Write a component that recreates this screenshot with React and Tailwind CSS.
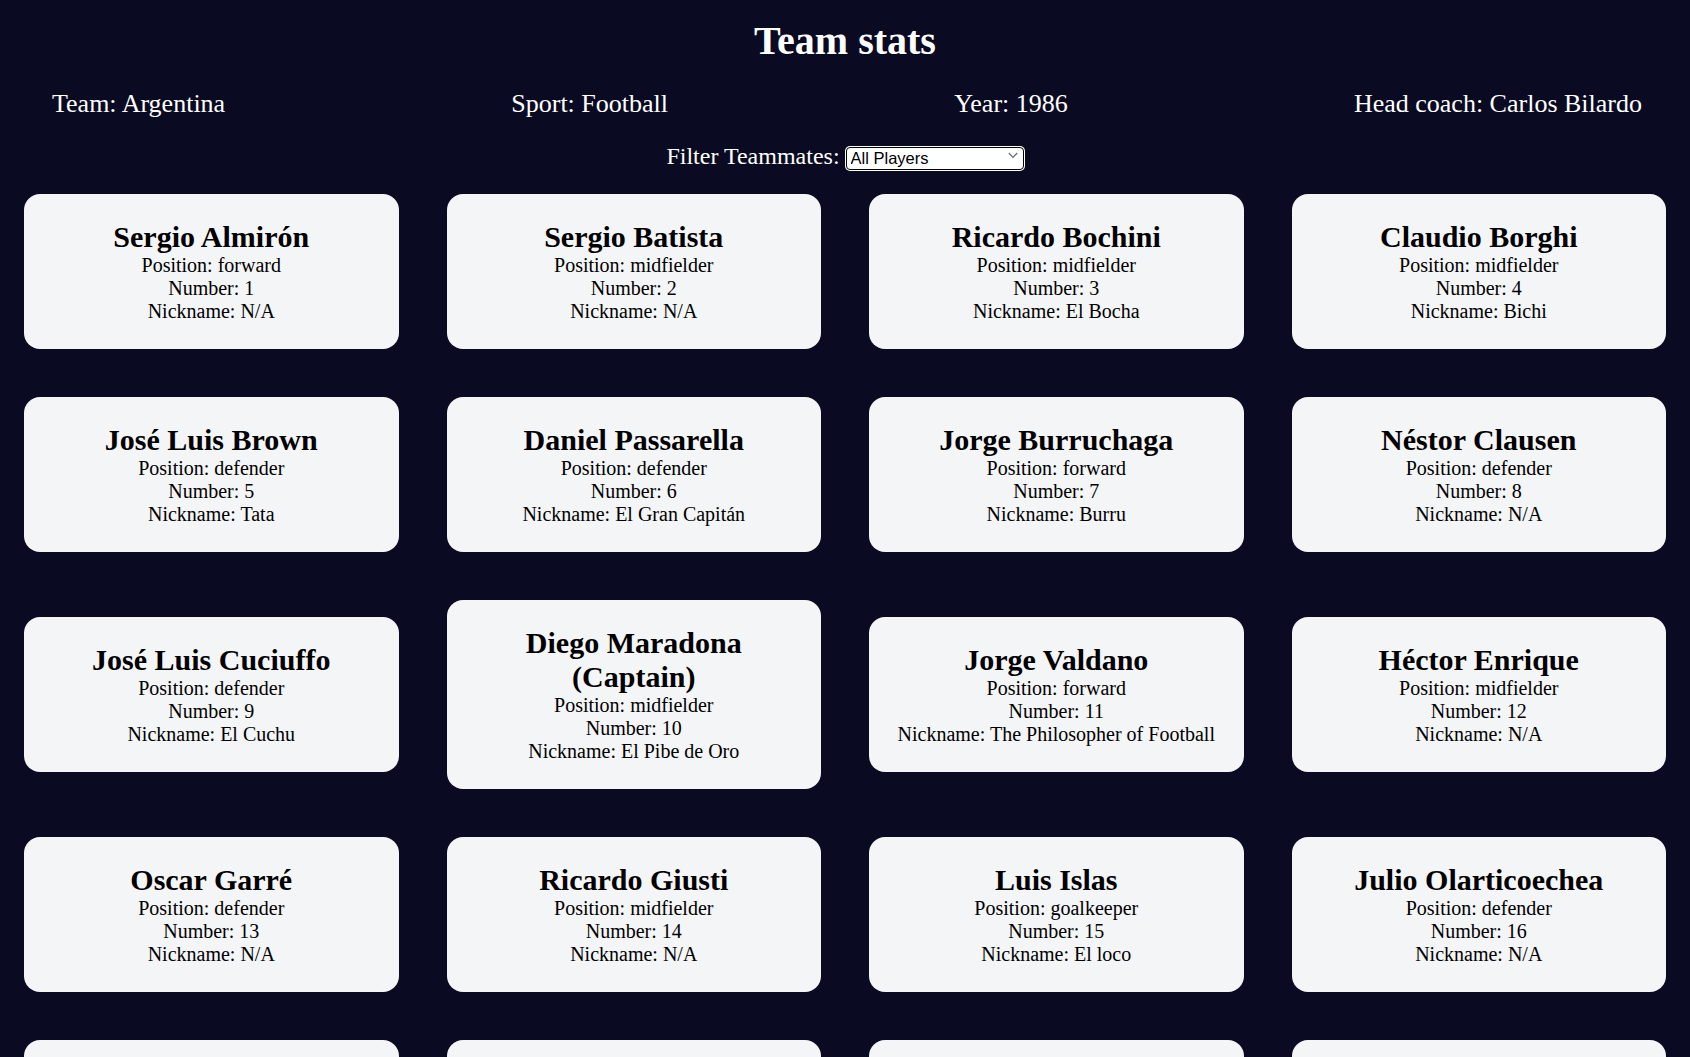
import React, { useState } from 'react';

const players = [
  { name: 'Sergio Almirón', position: 'forward', number: 1, nickname: 'N/A' },
  { name: 'Sergio Batista', position: 'midfielder', number: 2, nickname: 'N/A' },
  { name: 'Ricardo Bochini', position: 'midfielder', number: 3, nickname: 'El Bocha' },
  { name: 'Claudio Borghi', position: 'midfielder', number: 4, nickname: 'Bichi' },
  { name: 'José Luis Brown', position: 'defender', number: 5, nickname: 'Tata' },
  { name: 'Daniel Passarella', position: 'defender', number: 6, nickname: 'El Gran Capitán' },
  { name: 'Jorge Burruchaga', position: 'forward', number: 7, nickname: 'Burru' },
  { name: 'Néstor Clausen', position: 'defender', number: 8, nickname: 'N/A' },
  { name: 'José Luis Cuciuffo', position: 'defender', number: 9, nickname: 'El Cuchu' },
  { name: 'Diego Maradona', position: 'midfielder', number: 10, nickname: 'El Pibe de Oro', captain: true },
  { name: 'Jorge Valdano', position: 'forward', number: 11, nickname: 'The Philosopher of Football' },
  { name: 'Héctor Enrique', position: 'midfielder', number: 12, nickname: 'N/A' },
  { name: 'Oscar Garré', position: 'defender', number: 13, nickname: 'N/A' },
  { name: 'Ricardo Giusti', position: 'midfielder', number: 14, nickname: 'N/A' },
  { name: 'Luis Islas', position: 'goalkeeper', number: 15, nickname: 'El loco' },
  { name: 'Julio Olarticoechea', position: 'defender', number: 16, nickname: 'N/A' },
  { name: 'Pedro Pasculli', position: 'forward', number: 17, nickname: 'N/A' },
  { name: 'Nery Pumpido', position: 'goalkeeper', number: 18, nickname: 'N/A' },
  { name: 'Oscar Ruggeri', position: 'defender', number: 19, nickname: 'El Cabezón' },
  { name: 'Carlos Tapia', position: 'midfielder', number: 20, nickname: 'N/A' },
  { name: 'Marcelo Trobbiani', position: 'midfielder', number: 21, nickname: 'Calesita' },
  { name: 'Héctor Zelada', position: 'goalkeeper', number: 22, nickname: 'N/A' },
];

const PlayerCard = ({ player }) => (
  <div className="bg-[#f4f5f7] rounded-2xl pt-[26px] pb-[26px] px-4 text-center text-black">
    <h2 className="text-[30px] font-bold">
      {player.name}{player.captain && ' (Captain)'}
    </h2>
    <p>Position: {player.position}</p>
    <p>Number: {player.number}</p>
    <p>Nickname: {player.nickname}</p>
  </div>
);

const App = () => {
  const [filter, setFilter] = useState('all');

  const shown = players.filter((p) => filter === 'all' || p.position === filter);

  return (
    <div className="min-h-screen bg-[#0a0b23] text-white font-['Liberation_Serif','Times_New_Roman',serif] text-[20px] leading-[normal] pb-12">
      <h1 className="pt-[17px] text-center text-[40px] font-bold">Team stats</h1>

      {/* team info */}
      <div className="mt-[25px] flex justify-between pl-[52px] pr-[48px] text-[26px]">
        <span>Team: Argentina</span>
        <span>Sport: Football</span>
        <span>Year: 1986</span>
        <span>Head coach: Carlos Bilardo</span>
      </div>

      <div className="mt-[24px] text-center text-[24px]">
        <label htmlFor="filter">Filter Teammates: </label>
        <span className="relative inline-block align-baseline">
          <select
            id="filter"
            value={filter}
            onChange={(e) => setFilter(e.target.value)}
            className="appearance-none w-[178px] h-[23px] bg-white text-black border border-black rounded-[4px] ring-1 ring-white text-[16.5px] leading-[21px] font-['Liberation_Sans',Arial,sans-serif] pl-[4px] pr-6"
          >
            <option value="all">All Players</option>
            <option value="goalkeeper">Goalkeepers</option>
            <option value="defender">Defenders</option>
            <option value="midfielder">Midfielders</option>
            <option value="forward">Forwards</option>
          </select>
          <svg
            className="pointer-events-none absolute right-[6px] top-[9px]"
            width="10"
            height="7"
            viewBox="0 0 10 7"
            fill="none"
          >
            <path d="M0.8 1 L5 5.4 L9.2 1" stroke="#6b6b6b" strokeWidth="1.2" />
          </svg>
        </span>
      </div>

      <div className="mt-[24px] grid grid-cols-4 gap-12 px-6 items-center">
        {shown.map((p) => (
          <PlayerCard key={p.number} player={p} />
        ))}
      </div>
    </div>
  );
};

export default App;
